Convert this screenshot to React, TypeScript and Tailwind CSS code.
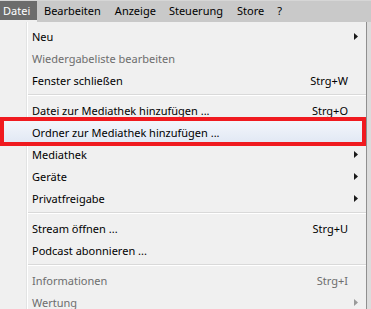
import React from 'react';

type Item =
  | { kind: 'sep' }
  | {
      kind: 'item';
      label: string;
      shortcut?: string;
      submenu?: boolean;
      disabled?: boolean;
      active?: boolean;
    };

const items: Item[] = [
  { kind: 'item', label: 'Neu', submenu: true },
  { kind: 'item', label: 'Wiedergabeliste bearbeiten', disabled: true },
  { kind: 'item', label: 'Fenster schließen', shortcut: 'Strg+W' },
  { kind: 'sep' },
  { kind: 'item', label: 'Datei zur Mediathek hinzufügen ...', shortcut: 'Strg+O' },
  { kind: 'item', label: 'Ordner zur Mediathek hinzufügen ...', active: true },
  { kind: 'item', label: 'Mediathek', submenu: true },
  { kind: 'item', label: 'Geräte', submenu: true },
  { kind: 'item', label: 'Privatfreigabe', submenu: true },
  { kind: 'sep' },
  { kind: 'item', label: 'Stream öffnen ...', shortcut: 'Strg+U' },
  { kind: 'item', label: 'Podcast abonnieren ...' },
  { kind: 'sep' },
  { kind: 'item', label: 'Informationen', shortcut: 'Strg+I', disabled: true },
  { kind: 'item', label: 'Wertung', submenu: true, disabled: true },
];

const menus = ['Bearbeiten', 'Anzeige', 'Steuerung', 'Store', '?'];

const Arrow = ({ disabled }: { disabled?: boolean }) => (
  <svg width="4" height="7" viewBox="0 0 4 7" className={disabled ? 'fill-[#9a9a9a]' : 'fill-[#1a1a1a]'}>
    <path d="M0 0 L4 3.5 L0 7 Z" />
  </svg>
);

export default function App() {
  return (
    <div className="w-[371px] h-[309px] overflow-hidden bg-[#dcdcdc] font-['Noto_Sans','Open_Sans',sans-serif] text-[11px] leading-none text-black">
      {/* Menu bar */}
      <div className="h-[22px] flex items-start bg-[#c9c9c9] border-t border-[#d6d6d6]">
        <div className="h-[21px] w-[37px] bg-[#6c6c6c] text-white border-b-2 border-[#f0f0f0] pl-[3px] pt-[4px]">
          Datei
        </div>
        <div className="flex pt-[4px]">
          {menus.map((m, i) => (
            <span
              key={m}
              className={
                i === 0
                  ? 'ml-[7px]'
                  : i === 1
                  ? 'ml-[14px]'
                  : i === 2
                  ? 'ml-[13px]'
                  : i === 3
                  ? 'ml-[14px]'
                  : 'ml-[13px]'
              }
            >
              {m}
            </span>
          ))}
        </div>
      </div>

      {/* Dropdown */}
      <div className="w-[367px] h-[287px] border-r border-[#8f8f8f] pt-[3px] bg-[linear-gradient(to_right,#f0f0f0_26px,#e2e3e3_26px,#e2e3e3_27px,#ffffff_27px,#ffffff_28px,#f0f0f0_28px)]">
        {items.map((it, i) => {
          if (it.kind === 'sep') {
            return (
              <div key={i} className="h-[8px] pl-[28px] flex flex-col justify-center">
                <div className="h-px bg-[#d9d9d9]" />
                <div className="h-px bg-white" />
              </div>
            );
          }
          return (
            <div
              key={i}
              className={`relative h-[22px] flex items-center pl-[32px] ${
                it.active ? 'bg-[linear-gradient(to_bottom,#f3f6fb,#e1e8f4)]' : ''
              } ${it.disabled ? 'text-[#6d6d6d]' : 'text-black'}`}
            >
              <span className="flex-1 whitespace-nowrap">{it.label}</span>
              {it.shortcut && <span className="whitespace-nowrap">{it.shortcut}</span>}
              <span className="w-[18px] h-full flex items-center pl-[6px]">
                {it.submenu && <Arrow disabled={it.disabled} />}
              </span>
              {it.active && (
                <div className="absolute left-0 right-0 top-[-4px] bottom-[-3px] border-4 border-[#f01a1f]" />
              )}
            </div>
          );
        })}
      </div>
    </div>
  );
}
